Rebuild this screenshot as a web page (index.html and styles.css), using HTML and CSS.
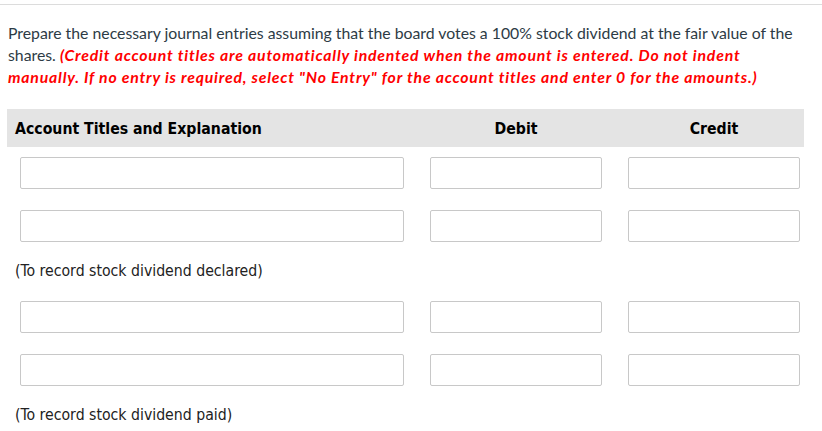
FILE: index.html
```html
<!DOCTYPE html>
<html>
<head>
<meta charset="utf-8">
<link rel="stylesheet" href="styles.css">
</head>
<body>
<div class="rule"></div>
<p class="prompt">Prepare the necessary journal entries assuming that the board votes a 100% stock dividend at the fair value of the shares. <strong class="note">(Credit account titles are automatically indented when the amount is entered. Do not indent manually. If no entry is required, select "No Entry" for the account titles and enter 0 for the amounts.)</strong></p>
<div class="journal">
  <div class="head">
    <div class="h-acct">Account Titles and Explanation</div>
    <div class="h-num">Debit</div>
    <div class="h-num h-credit">Credit</div>
  </div>
  <div class="row">
    <div class="c-acct"><input class="inp" type="text"></div>
    <div class="c-debit"><input class="inp" type="text"></div>
    <div class="c-credit"><input class="inp" type="text"></div>
  </div>
  <div class="row">
    <div class="c-acct"><input class="inp" type="text"></div>
    <div class="c-debit"><input class="inp" type="text"></div>
    <div class="c-credit"><input class="inp" type="text"></div>
  </div>
  <div class="memo">(To record stock dividend declared)</div>
  <div class="row">
    <div class="c-acct"><input class="inp" type="text"></div>
    <div class="c-debit"><input class="inp" type="text"></div>
    <div class="c-credit"><input class="inp" type="text"></div>
  </div>
  <div class="row">
    <div class="c-acct"><input class="inp" type="text"></div>
    <div class="c-debit"><input class="inp" type="text"></div>
    <div class="c-credit"><input class="inp" type="text"></div>
  </div>
  <div class="memo">(To record stock dividend paid)</div>
</div>
</body>
</html>
```
FILE: styles.css
```css
html, body {
  margin: 0;
  padding: 0;
  background: #fff;
}
.rule {
  margin-top: 4px;
  height: 1px;
  background: #dcdcdc;
}
.prompt {
  margin: 17px 17px 0 8px;
  font-family: Lato, "Open Sans", sans-serif;
  font-size: 15.8px;
  line-height: 22px;
  color: #2d3b45;
}
.note {
  color: #f00;
  font-style: italic;
  font-weight: 700;
  letter-spacing: 0.8px;
}
.journal {
  margin: 21px 0 0 7px;
  width: 797px;
  font-family: "DejaVu Sans Condensed", "DejaVu Sans", sans-serif;
  color: #000;
}
.head, .row {
  display: grid;
  grid-template-columns: 410px 198px 189px;
}
.head {
  height: 38px;
  line-height: 40px;
  background: #e4e4e4;
  font-weight: 700;
  font-size: 15.7px;
}
.h-acct {
  padding-left: 8px;
}
.h-num {
  text-align: center;
}
.h-credit {
  padding-left: 9px;
}
.row {
  padding: 10px 0 11px;
}
.c-acct, .c-debit, .c-credit {
  padding-left: 13px;
}
.inp {
  display: block;
  box-sizing: border-box;
  height: 32px;
  margin: 0;
  padding: 0 6px;
  border: 1px solid #c8c8c8;
  border-radius: 2px;
  background: #fff;
  outline: none;
}
.c-acct .inp { width: 384px; }
.c-debit .inp, .c-credit .inp { width: 172px; }
.memo {
  height: 38px;
  line-height: 36px;
  padding-left: 8px;
  font-size: 15.7px;
  color: #222;
}
```
